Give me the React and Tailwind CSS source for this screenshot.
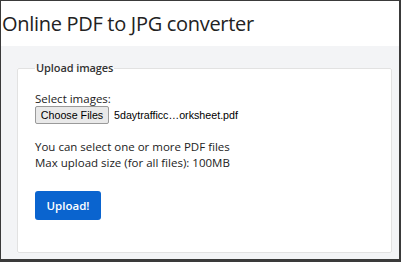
export default function App() {
  return (
    <div className="w-[401px] h-[262px] bg-[#f3f4f6] border-t border-l border-r-2 border-b-[3px] border-[#3a3a3a] flex flex-col overflow-hidden" style={{ fontFamily: '"Open Sans", "Noto Sans", sans-serif' }}>
      <div className="bg-white h-[45px] shrink-0 pl-[1px] pt-[9px]">
        <h1 className="text-[20px] leading-[28px] text-[#222] tracking-[-0.3px]">Online PDF to JPG converter</h1>
      </div>
      <div className="flex-1 pl-[16px] pr-[7px] pt-[14px] pb-[6px] flex">
        <fieldset className="flex-1 bg-white border border-[#e2e2e2] rounded-[2px] pl-[17px] pr-4 text-[11.5px] text-[#222] leading-[16px]">
          <legend className="px-[1px] font-semibold text-[11px] leading-[16px] text-[#333] tracking-[-0.1px]">Upload images</legend>
          <div className="mt-[15px]">Select images:</div>
          <div className="flex items-center gap-[5px] -mt-[1px]" style={{ fontFamily: '"Liberation Sans", Arial, sans-serif' }}>
            <button className="h-[18px] w-[74px] bg-[#e9e9e9] border border-[#9a9a9a] rounded-[2px] text-[10.7px] leading-[14px] text-black">Choose Files</button>
            <span className="text-[10.7px] text-black">5daytrafficc…orksheet.pdf</span>
          </div>
          <div className="mt-[15px]">You can select one or more PDF files</div>
          <div>Max upload size (for all files): 100MB</div>
          <button className="block mt-[20px] w-[66px] h-[29px] bg-[#0a64cf] text-white text-[11.5px] rounded-[3px] font-semibold">Upload!</button>
        </fieldset>
      </div>
    </div>
  );
}
